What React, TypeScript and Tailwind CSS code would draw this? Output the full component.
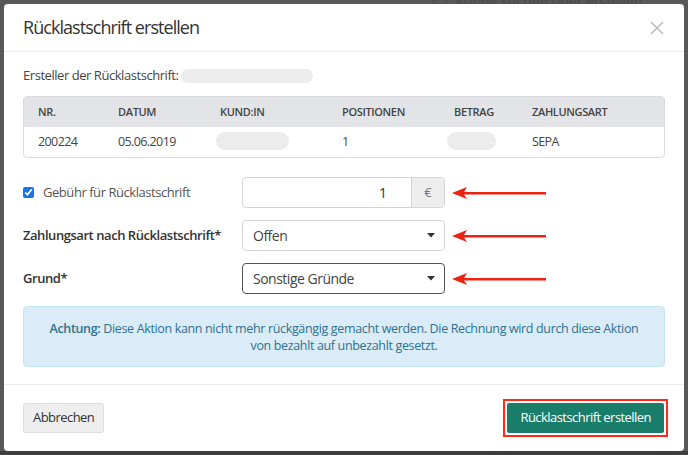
import { ChevronDown } from "lucide-react";

const font = { fontFamily: '"Open Sans", "Liberation Sans", sans-serif' };

function Pill({ className }: { className: string }) {
  return <span className={`inline-block rounded-full bg-[#ececec] ${className}`} />;
}

function Arrow() {
  return (
    <svg width="96" height="14" viewBox="0 0 96 14" className="ml-[7px] shrink-0">
      <path d="M0 7 L15 1 L12 6 L94 6 L94 8.5 L12 8.5 L15 13 Z" fill="#ee2211" />
    </svg>
  );
}

function Caret() {
  return (
    <svg width="8" height="5" viewBox="0 0 8 5">
      <path d="M0 0 L8 0 L4 4.5 Z" fill="#333" />
    </svg>
  );
}

export default function App() {
  const cols = [
    { label: "NR.", w: "w-[80px]" },
    { label: "DATUM", w: "w-[102px]" },
    { label: "KUND:IN", w: "w-[122px]" },
    { label: "POSITIONEN", w: "w-[112px]" },
    { label: "BETRAG", w: "w-[78px]" },
    { label: "ZAHLUNGSART", w: "flex-1" },
  ];

  return (
    <div className="relative h-[455px] w-[688px] overflow-hidden bg-[#585858]" style={font}>
      {/* faint page behind the backdrop */}
      <div className="absolute left-[432px] top-[-9px] text-[14px] text-[#4a4a4a]">◯&nbsp; Kunde suchen oder erstellen</div>
      <div className="absolute bottom-0 left-0 h-[4px] w-full bg-[#3e3e3e]" />

      <div className="absolute left-[4px] top-[4px] flex h-[447px] w-[680px] flex-col rounded-[4px] bg-white text-[#333]">
        {/* header */}
        <div className="flex h-[48px] items-center justify-between border-b border-[#ececec] pl-[19px] pr-[20px]">
          <h1 className="text-[18px] tracking-[-0.95px] text-[#333]">Rücklastschrift erstellen</h1>
          <svg width="14" height="14" viewBox="0 0 14 14" className="mt-[1px]">
            <path d="M1 1 L13 13 M13 1 L1 13" stroke="#b5b5b5" strokeWidth="1.4" />
          </svg>
        </div>

        {/* body */}
        <div className="flex flex-1 flex-col px-[19px] pt-[15px]">
          <div className="flex h-[18px] items-center text-[13px] tracking-[-0.45px] text-[#444]">
            Ersteller der Rücklastschrift:
            <Pill className="ml-[3px] h-[14px] w-[132px]" />
          </div>

          <div className="mt-[11px] overflow-hidden rounded-[4px] border border-[#d9dadd]">
            <div className="flex h-[30px] items-center bg-[#e3e4e7] pl-[14px] text-[11px] font-semibold tracking-[-0.35px] text-[#444]">
              {cols.map((c) => (
                <div key={c.label} className={c.w}>
                  {c.label}
                </div>
              ))}
            </div>
            <div className="flex h-[30px] items-center pl-[14px] text-[12.5px] tracking-[-0.6px] text-[#444]">
              <div className="w-[80px]">200224</div>
              <div className="w-[102px]">05.06.2019</div>
              <div className="w-[122px]">
                <Pill className="-ml-[4px] mt-[3px] h-[18px] w-[73px]" />
              </div>
              <div className="w-[112px]">1</div>
              <div className="w-[78px]">
                <Pill className="-ml-[7px] mt-[3px] h-[18px] w-[49px]" />
              </div>
              <div className="flex-1">SEPA</div>
            </div>
          </div>

          {/* fields */}
          <div className="mt-[19px] flex flex-col gap-[12px]">
            <div className="flex items-center">
              <label className="flex w-[219px] items-center gap-[9px] text-[13px] tracking-[-0.45px] text-[#555]">
                <input type="checkbox" defaultChecked className="m-0 h-[11px] w-[11px] accent-[#1a73e8]" />
                Gebühr für Rücklastschrift
              </label>
              <div className="flex h-[31px] w-[203px] overflow-hidden rounded-[4px] border border-[#d5d5d5]">
                <div className="flex flex-1 items-center justify-end pr-[24px] text-[14px] text-[#333]">1</div>
                <div className="flex w-[33px] items-center justify-center border-l border-[#d5d5d5] bg-[#eeeeee] text-[13px] text-[#777]">
                  €
                </div>
              </div>
              <Arrow />
            </div>

            <div className="flex items-center">
              <div className="w-[219px] text-[13px] font-semibold tracking-[-0.45px] text-[#333]">
                Zahlungsart nach Rücklastschrift*
              </div>
              <div className="flex h-[31px] w-[203px] items-center justify-between rounded-[4px] border border-[#d5d5d5] pl-[10px] pr-[9px] text-[14px] tracking-[-0.5px] text-[#444]">
                Offen
                <Caret />
              </div>
              <Arrow />
            </div>

            <div className="flex items-center">
              <div className="w-[219px] text-[13px] font-semibold tracking-[-0.45px] text-[#333]">Grund*</div>
              <div className="flex h-[31px] w-[203px] items-center justify-between rounded-[4px] border border-[#555] pl-[10px] pr-[9px] text-[14px] tracking-[-0.5px] text-[#444]">
                Sonstige Gründe
                <Caret />
              </div>
              <Arrow />
            </div>
          </div>

          <div className="mt-[12px] flex h-[61px] flex-col items-center justify-center rounded-[4px] border border-[#c6e3f2] bg-[#d9ecf7] px-[20px] text-center text-[12.5px] leading-[17px] tracking-[-0.35px] text-[#31708f]">
            <p>
              <span className="font-semibold">Achtung:</span> Diese Aktion kann nicht mehr rückgängig gemacht werden. Die
              Rechnung wird durch diese Aktion
            </p>
            <p>von bezahlt auf unbezahlt gesetzt.</p>
          </div>
        </div>

        {/* footer */}
        <div className="flex h-[67px] items-center justify-between border-t border-[#ececec] pl-[19px] pr-[16px]">
          <button className="h-[30px] rounded-[3px] border border-[#dcdcdc] bg-[#eeeeee] px-[9px] text-[13px] tracking-[-0.55px] text-[#333]">
            Abbrechen
          </button>
          <div className="border-[2px] border-[#ff2a1a] p-[2px]">
            <button className="h-[30px] rounded-[2px] bg-[#1a7d6a] px-[13px] text-[13px] tracking-[-0.55px] text-white">
              Rücklastschrift erstellen
            </button>
          </div>
        </div>
      </div>
    </div>
  );
}
